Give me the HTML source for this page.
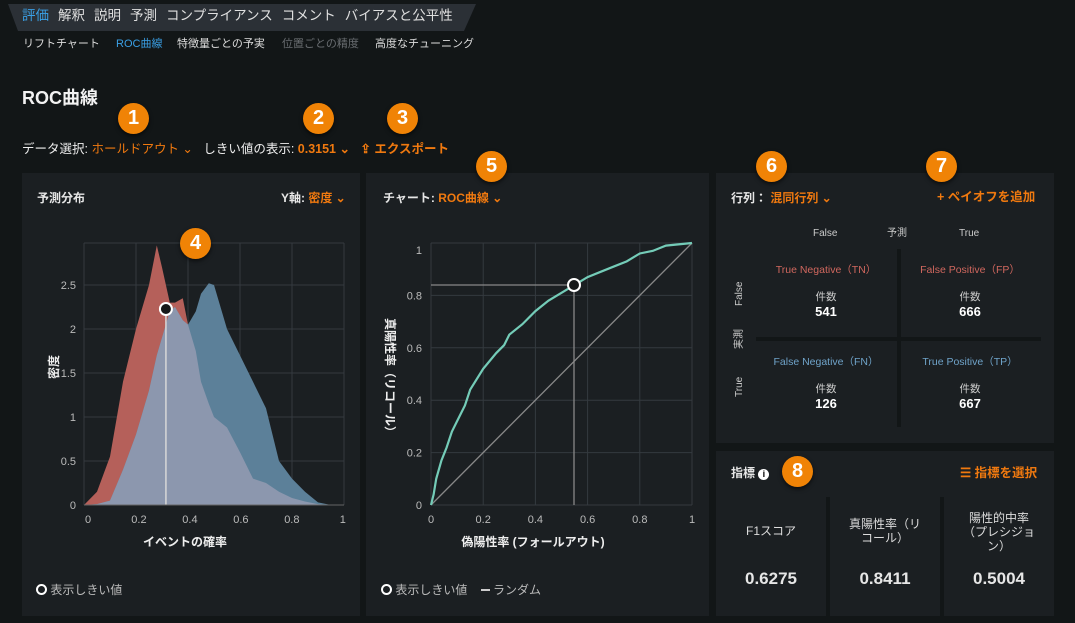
<!DOCTYPE html>
<html><head><meta charset="utf-8">
<style>
*{margin:0;padding:0;box-sizing:border-box}
body{width:1075px;height:623px;background:#121617;font-family:"Liberation Sans","Noto Sans CJK JP",sans-serif;color:#e6e6e6;position:relative;overflow:hidden}
.abs{position:absolute;white-space:nowrap;line-height:1.2}
.or{color:#f0790f}
.panel{position:absolute;background:#1b1f22}
.badge{position:absolute;width:31px;height:31px;border-radius:50%;background:#f08306;color:#fff;font-weight:bold;font-size:20px;line-height:31px;text-align:center;box-shadow:0 2px 4px rgba(0,0,0,.6)}
.tabs span{margin-right:9px}
svg text{font-family:"Liberation Sans","Noto Sans CJK JP",sans-serif}
</style></head><body>
<svg class="abs" style="left:0;top:0" width="480" height="32"><polygon points="8,4 476,4 464,31 18,31" fill="#2b3036"/></svg>
<div class="abs tabs" style="left:22px;top:8px;font-size:13.5px;color:#e0e0e0"><span style="color:#3aa0e6">評価</span><span>解釈</span><span>説明</span><span>予測</span><span>コンプライアンス</span><span>コメント</span><span>バイアスと公平性</span></div>
<div class="abs" style="left:23px;top:38px;font-size:11px;color:#ddd">リフトチャート</div>
<div class="abs" style="left:116px;top:38px;font-size:11px;color:#3aa0e6">ROC曲線</div>
<div class="abs" style="left:177px;top:38px;font-size:11px;color:#ddd">特徴量ごとの予実</div>
<div class="abs" style="left:282px;top:38px;font-size:11px;color:#6a6e72">位置ごとの精度</div>
<div class="abs" style="left:375px;top:38px;font-size:11px;color:#ddd">高度なチューニング</div>
<div class="abs" style="left:22px;top:88px;font-size:18px;font-weight:bold;color:#f2f2f2">ROC曲線</div>
<div class="abs" style="left:22px;top:142px;font-size:12.5px;color:#eee">データ選択: <span class="or">ホールドアウト ⌄</span>&nbsp;&nbsp; しきい値の表示: <span class="or" style="font-weight:bold">0.3151 ⌄</span>&nbsp;&nbsp; <span class="or" style="font-weight:bold">⇪ エクスポート</span></div>

<div class="panel" style="left:22px;top:173px;width:338px;height:443px"></div>
<div class="panel" style="left:366px;top:173px;width:343px;height:443px"></div>
<div class="panel" style="left:716px;top:173px;width:338px;height:270px"></div>
<div class="panel" style="left:716px;top:451px;width:338px;height:165px"></div>

<div class="abs" style="left:37px;top:191px;font-size:12px;font-weight:bold">予測分布</div>
<div class="abs" style="left:281px;top:191px;font-size:12px;font-weight:bold">Y軸: <span class="or">密度 ⌄</span></div>
<svg class="abs" id="c1" style="left:0;top:0" width="365" height="623"></svg>
<div class="abs" style="left:36px;top:583px;font-size:12px;color:#bbb"><span style="display:inline-block;width:11px;height:11px;border:2px solid #fff;border-radius:50%;vertical-align:-1px"></span> 表示しきい値</div>

<div class="abs" style="left:383px;top:191px;font-size:12px;font-weight:bold">チャート: <span class="or">ROC曲線 ⌄</span></div>
<svg class="abs" id="c2" style="left:0;top:0" width="715" height="623"></svg>
<div class="abs" style="left:381px;top:583px;font-size:12px;color:#bbb"><span style="display:inline-block;width:11px;height:11px;border:2px solid #fff;border-radius:50%;vertical-align:-1px"></span> 表示しきい値 &nbsp;&nbsp; <span style="display:inline-block;width:9px;height:2px;background:#ccc;vertical-align:3px"></span> ランダム</div>

<div class="abs" style="left:731px;top:191px;font-size:12px;font-weight:bold">行列： <span class="or">混同行列 ⌄</span></div>
<div class="abs or" style="left:937px;top:190px;font-size:12.5px;font-weight:bold">+ ペイオフを追加</div>
<div class="abs" style="left:813px;top:228px;font-size:10px;color:#ccc">False</div>
<div class="abs" style="left:887px;top:228px;font-size:10px;color:#ccc">予測</div>
<div class="abs" style="left:959px;top:228px;font-size:10px;color:#ccc">True</div>
<div class="abs" style="left:897px;top:249px;width:4px;height:178px;background:#121617"></div>
<div class="abs" style="left:756px;top:337px;width:285px;height:4px;background:#121617"></div>
<div class="abs" style="left:734px;top:306px;font-size:10px;color:#ccc;transform:rotate(-90deg);transform-origin:left top">False</div>
<div class="abs" style="left:734px;top:349px;font-size:10px;color:#ccc;transform:rotate(-90deg);transform-origin:left top">実測</div>
<div class="abs" style="left:734px;top:397px;font-size:10px;color:#ccc;transform:rotate(-90deg);transform-origin:left top">True</div>
<div class="abs" style="left:756px;top:264px;width:140px;text-align:center;font-size:10.5px;color:#d0675e">True Negative（TN）</div>
<div class="abs" style="left:900px;top:264px;width:140px;text-align:center;font-size:10.5px;color:#d0675e">False Positive（FP）</div>
<div class="abs" style="left:756px;top:356px;width:140px;text-align:center;font-size:10.5px;color:#6fa3c9">False Negative（FN）</div>
<div class="abs" style="left:900px;top:356px;width:140px;text-align:center;font-size:10.5px;color:#6fa3c9">True Positive（TP）</div>
<div class="abs" style="left:756px;top:291px;width:140px;text-align:center;font-size:10.5px;color:#ccc">件数<br><b style="font-size:13px;color:#fff">541</b></div>
<div class="abs" style="left:900px;top:291px;width:140px;text-align:center;font-size:10.5px;color:#ccc">件数<br><b style="font-size:13px;color:#fff">666</b></div>
<div class="abs" style="left:756px;top:383px;width:140px;text-align:center;font-size:10.5px;color:#ccc">件数<br><b style="font-size:13px;color:#fff">126</b></div>
<div class="abs" style="left:900px;top:383px;width:140px;text-align:center;font-size:10.5px;color:#ccc">件数<br><b style="font-size:13px;color:#fff">667</b></div>

<div class="abs" style="left:731px;top:466px;font-size:12px;font-weight:bold">指標 <span style="display:inline-block;width:11px;height:11px;border-radius:50%;background:#fff;color:#000;font-size:9px;line-height:11px;text-align:center;vertical-align:0">i</span></div>
<div class="abs or" style="left:960px;top:466px;font-size:12.5px;font-weight:bold">☰ 指標を選択</div>
<div class="abs" style="left:826px;top:497px;width:4px;height:119px;background:#121617"></div>
<div class="abs" style="left:940px;top:497px;width:4px;height:119px;background:#121617"></div>
<div class="abs" style="left:716px;top:524px;width:110px;text-align:center;font-size:12px;color:#ddd">F1スコア</div>
<div class="abs" style="left:830px;top:517px;width:110px;text-align:center;font-size:12px;color:#ddd;line-height:14px">真陽性率（リ<br>コール）</div>
<div class="abs" style="left:944px;top:511px;width:110px;text-align:center;font-size:12px;color:#ddd;line-height:14px">陽性的中率<br>（プレシジョ<br>ン）</div>
<div class="abs" style="left:716px;top:569px;width:110px;text-align:center;font-size:17px;font-weight:bold">0.6275</div>
<div class="abs" style="left:830px;top:569px;width:110px;text-align:center;font-size:17px;font-weight:bold">0.8411</div>
<div class="abs" style="left:944px;top:569px;width:110px;text-align:center;font-size:17px;font-weight:bold">0.5004</div>

<div class="badge" style="left:118px;top:103px">1</div>
<div class="badge" style="left:303px;top:103px">2</div>
<div class="badge" style="left:387px;top:103px">3</div>
<div class="badge" style="left:180px;top:228px">4</div>
<div class="badge" style="left:476px;top:151px">5</div>
<div class="badge" style="left:756px;top:151px">6</div>
<div class="badge" style="left:926px;top:151px">7</div>
<div class="badge" style="left:782px;top:456px">8</div>

<script>
function S(id,h){document.getElementById(id).innerHTML=h;}
var h='';
var X0=84,XW=260,Y0=505,K=88;
for(var i=0;i<=5;i++){var x=X0+XW*i/5;h+='<line x1="'+x+'" y1="243" x2="'+x+'" y2="505" stroke="#343a3f"/>';}
for(var d=0;d<=2.5;d+=0.5){var y=Y0-K*d;h+='<line x1="84" y1="'+y+'" x2="344" y2="'+y+'" stroke="#343a3f"/>';}
h+='<line x1="84" y1="243" x2="344" y2="243" stroke="#343a3f"/>';
var V=[0,0.05,0.1,0.15,0.2,0.25,0.28,0.3,0.33,0.35,0.38,0.4,0.43,0.45,0.48,0.5,0.55,0.6,0.65,0.7,0.75,0.8,0.85,0.9,0.95,1];
var R=[0,0.15,0.55,1.4,2.0,2.5,2.95,2.7,2.3,2.3,2.35,2.05,1.75,1.4,1.15,1.0,0.88,0.6,0.3,0.25,0.15,0.08,0.04,0.01,0,0];
var B=[0,0.01,0.05,0.4,0.8,1.3,1.7,1.9,2.2,2.25,2.1,2.05,2.2,2.4,2.52,2.5,2.0,1.7,1.4,1.1,0.5,0.3,0.15,0.03,0,0];
function area(A,c){var p='M'+X0+','+Y0;for(var i=0;i<V.length;i++)p+=' L'+(X0+XW*V[i])+','+(Y0-K*A[i]);p+=' L344,505Z';return '<path d="'+p+'" fill="'+c+'"/>';}
var M=R.map(function(r,i){return Math.min(r,B[i]);});
h+=area(R,'#b5605a')+area(B,'#5c8099')+area(M,'#8c97ae');
var tx=X0+XW*0.3151;
h+='<line x1="'+tx+'" y1="310" x2="'+tx+'" y2="505" stroke="#d8d8d8" stroke-width="1.5"/><circle cx="'+tx+'" cy="309" r="6" fill="#151819" stroke="#fff" stroke-width="2"/>';
h+='<line x1="84" y1="505" x2="344" y2="505" stroke="#666"/>';
var yl=['0','0.5','1','1.5','2','2.5'];
for(var i=0;i<6;i++)h+='<text x="76" y="'+(Y0-K*i*0.5+4)+'" text-anchor="end" font-size="11" fill="#bbb">'+yl[i]+'</text>';
var xl=['0','0.2','0.4','0.6','0.8','1'];
for(var i=0;i<6;i++)h+='<text x="'+(X0+4+XW*i/5*0.98)+'" y="523" text-anchor="middle" font-size="11" fill="#bbb">'+xl[i]+'</text>';
h+='<text x="185" y="546" text-anchor="middle" font-size="12" font-weight="bold" fill="#eee">イベントの確率</text>';
h+='<text transform="translate(58,367) rotate(-90)" text-anchor="middle" font-size="12" font-weight="bold" fill="#eee">密度</text>';
S('c1',h);
h='';var A0=431,AW=261,B0=505,BH=262;
for(var i=0;i<=5;i++){var x=A0+AW*i/5;h+='<line x1="'+x+'" y1="243" x2="'+x+'" y2="505" stroke="#343a3f"/>';var y=B0-BH*i/5;h+='<line x1="431" y1="'+y+'" x2="692" y2="'+y+'" stroke="#343a3f"/>';}
h+='<line x1="431" y1="505" x2="692" y2="243" stroke="#888" stroke-width="1.3"/>';
h+='<line x1="431" y1="285" x2="574" y2="285" stroke="#888" stroke-width="1.3"/><line x1="574" y1="285" x2="574" y2="505" stroke="#888" stroke-width="1.3"/>';
var P=[[0,0],[0.01,0.04],[0.02,0.1],[0.04,0.17],[0.06,0.22],[0.08,0.28],[0.1,0.32],[0.13,0.38],[0.15,0.44],[0.2,0.52],[0.25,0.58],[0.28,0.61],[0.3,0.65],[0.35,0.69],[0.4,0.74],[0.45,0.78],[0.5,0.81],[0.55,0.84],[0.6,0.87],[0.65,0.89],[0.7,0.91],[0.75,0.93],[0.8,0.96],[0.85,0.97],[0.9,0.99],[1,1]];
var p='';P.forEach(function(q,i){p+=(i?' L':'M')+(A0+AW*q[0])+','+(B0-BH*q[1]);});
h+='<path d="'+p+'" fill="none" stroke="#74ccb8" stroke-width="2.2"/>';
h+='<circle cx="574" cy="285" r="6" fill="#151819" stroke="#fff" stroke-width="2"/>';
var yl2=['0','0.2','0.4','0.6','0.8','1'];
for(var i=0;i<6;i++){h+='<text x="422" y="'+(B0-BH*i/5+(i==5?11:4))+'" text-anchor="end" font-size="11" fill="#bbb">'+yl2[i]+'</text>';h+='<text x="'+(A0+AW*i/5)+'" y="523" text-anchor="middle" font-size="11" fill="#bbb">'+yl2[i]+'</text>';}
h+='<text x="533" y="546" text-anchor="middle" font-size="12" font-weight="bold" fill="#eee">偽陽性率 (フォールアウト)</text>';
h+='<text transform="translate(386,378) rotate(90)" text-anchor="middle" font-size="12" font-weight="bold" fill="#eee">真陽性率（リコール）</text>';
S('c2',h);
</script>
</body></html>
